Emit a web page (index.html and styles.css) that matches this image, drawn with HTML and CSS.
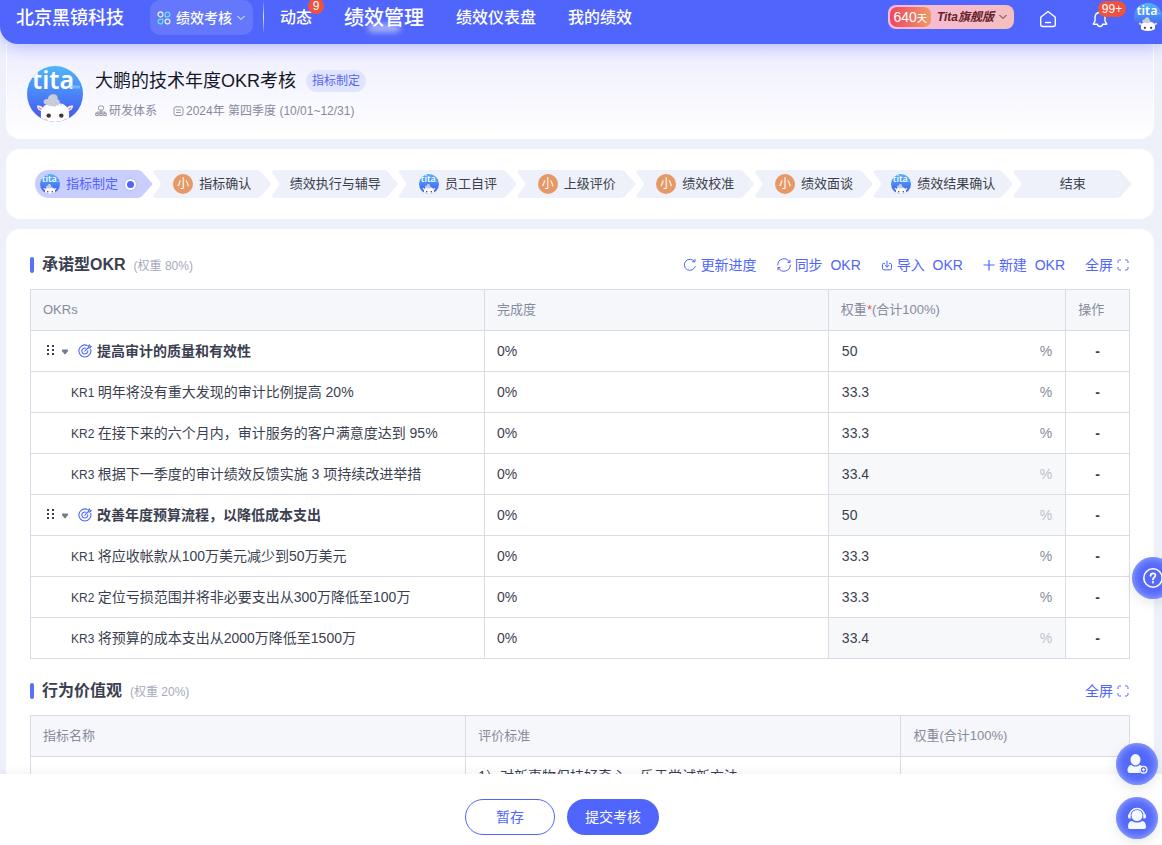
FILE: index.html
```html
<!DOCTYPE html>
<html lang="zh-CN">
<head>
<meta charset="utf-8">
<meta name="viewport" content="width=device-width, initial-scale=1">
<title>绩效考核</title>
<link rel="stylesheet" href="styles.css">
</head>
<body>
<svg class="defs" aria-hidden="true">
  <defs>
    <linearGradient id="sky" x1="0" y1="0" x2="0" y2="1"><stop offset="0" stop-color="#4fb6fb"/><stop offset="1" stop-color="#4553f2"/></linearGradient>
    <clipPath id="round"><circle cx="28" cy="28" r="28"/></clipPath>
  </defs>
</svg>
<svg class="sprite" aria-hidden="true">
  <symbol id="avatar" viewBox="0 0 56 56">
    <g clip-path="url(#round)">
      <rect width="56" height="56" fill="url(#sky)"/>
      <text x="5" y="23" class="avatar-word">tita</text>
      <path d="M43.500 19.500h9.500v3h-9.500z" fill="#8fd0ff" opacity=".6"/>
      <path d="M17 43c-2-3-5-4-7-3.500 0 3 2 5.500 5 5.500zM39 43c2-3 5-4 7-3.500 0 3-2 5.500-5 5.500z" fill="#fff"/>
      <path d="M15.500 43.500c-1.500-2-3-2.800-4.300-2.800.3 1.800 1.500 3 3.300 3.300zM40.500 43.500c1.500-2 3-2.800 4.300-2.800-.3 1.800-1.500 3-3.300 3.300z" fill="#f08f95"/>
      <path d="M14 50c-1-7 3-12 9-12.500h10c6 .5 10 5.500 9 12.500 1 5-4 8-14 8s-15-3-14-8z" fill="#fff"/>
      <path d="M17 37.500c-1.500-3 1-5 4-4.500 0-3 3-5 6-4.700 3 .2 4 3 3.500 5C33 34 34 38 31 39c-4 2-9 1.500-14-1.500z" fill="#c6ccda"/>
      <path d="M28 38v3M31 37v3M34 37.500v2.500" stroke="#c6ccda" fill="none"/>
      <circle cx="21.700" cy="49.600" r="2.200" fill="#43362f"/><circle cx="34.300" cy="49.600" r="2.200" fill="#43362f"/>
      <path d="M17 53.500h3M37 53.500h3" stroke="#f6cdd0" stroke-width="1.500"/>
    </g>
  </symbol>
  <symbol id="expand" viewBox="0 0 12 12"><path d="M1 4V2.500Q1 1 2.500 1H4M8 1h1.500Q11 1 11 2.500V4M11 8v1.500Q11 11 9.500 11H8M4 11H2.500Q1 11 1 9.500V8" fill="none" stroke="currentColor"/></symbol>
  <symbol id="target" viewBox="0 0 14 14"><g fill="none" stroke="currentColor" stroke-width="1.100" stroke-linecap="round"><path d="M9.200 1.400A6 6 0 1 0 12.700 5.400"/><path d="M7.800 4.200A3 3 0 1 0 9.800 6.800"/><path d="M6.800 7.200L10.300 3.700M10.300 3.700V2.300L11.500 1l.5 1.200 1.200.4-1.300 1.300z"/></g></symbol>
  <symbol id="grip" viewBox="0 0 8 12"><path d="M0 0h2v2H0zM5 0h2v2H5zM0 4h2v2H0zM5 4h2v2H5zM0 8h2v2H0zM5 8h2v2H5z" fill="currentColor"/></symbol>
  <symbol id="caret" viewBox="0 0 8 6"><path d="M1.500.500h5q1.300.500.300 1.800L4.700 5q-.7.700-1.400 0L1.200 2.300Q.200 1 1.500.500z" fill="currentColor"/></symbol>
  <symbol id="chev" viewBox="0 0 8 6"><path d="M.500 1L4 4.500 7.500 1" fill="none" stroke="currentColor"/></symbol>
</svg>

<header class="topbar">
  <strong class="company">北京黑镜科技</strong>
  <button class="module" type="button">
    <svg width="14" height="14" viewBox="0 0 14 14" fill="none" stroke-width="1.300"><path d="M3.500 1a2.400 2.400 0 1 1 0 4.800 2.400 2.400 0 0 1 0-4.800z" stroke="#e4e8ff"/><path d="M8.200 5.800V3.400a2.300 2.300 0 1 1 2.300 2.400z" stroke="#6ee0f2"/><path d="M5.800 8.200v2.400a2.300 2.300 0 1 1-2.300-2.400z" stroke="#5ce6d0"/><path d="M10.500 8.200a2.400 2.400 0 1 1 0 4.800 2.400 2.400 0 0 1 0-4.800z" stroke="#e4e8ff"/></svg>
    <span>绩效考核</span>
    <svg width="8" height="6"><use href="#chev"/></svg>
  </button>
  <span class="divider"></span>
  <nav class="nav">
    <a href="#" class="nav-link">动态<span class="count">9</span></a>
    <a href="#" class="nav-link current">绩效管理</a>
    <a href="#" class="nav-link">绩效仪表盘</a>
    <a href="#" class="nav-link">我的绩效</a>
  </nav>
  <div class="tools">
    <button class="plan" type="button"><span class="days">640<small>天</small></span><em>Tita旗舰版</em><svg width="8" height="6"><use href="#chev"/></svg></button>
    <button class="tool home" type="button" aria-label="首页"><svg width="18" height="18" viewBox="0 0 18 18" fill="none" stroke="#fff" stroke-width="1.400" stroke-linecap="round" stroke-linejoin="round"><path d="M1.700 7.200L9 1.500l7.300 5.700v7.300q0 2-2 2H3.700q-2 0-2-2z"/><path d="M6.500 12.500h5"/></svg></button>
    <button class="tool bell" type="button" aria-label="通知"><svg width="16" height="18" viewBox="0 0 16 18" fill="none" stroke="#fff" stroke-width="1.400" stroke-linecap="round" stroke-linejoin="round"><path d="M8 2.500c-3.300 0-5 2.200-5 5V11l-1.700 3.200h4q.5 2.300 2.700 2.300t2.700-2.300h4L13 11V7.500c0-2.800-1.700-5-5-5z"/></svg><span class="count wide">99+</span></button>
    <svg class="me" width="28" height="28"><use href="#avatar"/></svg>
  </div>
</header>

<main class="content">
  <section class="card profile">
    <svg width="56" height="56"><use href="#avatar"/></svg>
    <div class="profile-text">
      <div class="profile-title"><h1>大鹏的技术年度OKR考核</h1><span class="tag">指标制定</span></div>
      <div class="meta">
        <span><svg width="12" height="12" viewBox="0 0 12 12" fill="none" stroke="currentColor" stroke-width=".9"><rect x="3.500" y="1" width="5" height="4" rx="1.300"/><path d="M6 5v3M2 8.300V7h8v1.300"/><rect x=".8" y="8.300" width="2.400" height="2.200"/><rect x="4.800" y="8.300" width="2.400" height="2.200"/><rect x="8.800" y="8.300" width="2.400" height="2.200"/></svg>研发体系</span>
        <span><svg width="11" height="12" viewBox="0 0 11 12" fill="none" stroke="currentColor" stroke-width=".9"><rect x="1" y="1.800" width="9" height="8.700" rx="2"/><path d="M3.200 5h4.600M3.200 7.500h4.600"/></svg>2024年 第四季度 (10/01~12/31)</span>
      </div>
    </div>
  </section>

  <section class="card flow">
    <ol class="steps">
      <li class="step active"><svg width="20" height="20"><use href="#avatar"/></svg>指标制定<i class="dot"></i></li>
      <li class="step"><b class="who">小</b>指标确认</li>
      <li class="step">绩效执行与辅导</li>
      <li class="step"><svg width="20" height="20"><use href="#avatar"/></svg>员工自评</li>
      <li class="step"><b class="who">小</b>上级评价</li>
      <li class="step"><b class="who">小</b>绩效校准</li>
      <li class="step"><b class="who">小</b>绩效面谈</li>
      <li class="step"><svg width="20" height="20"><use href="#avatar"/></svg>绩效结果确认</li>
      <li class="step">结束</li>
    </ol>
  </section>

  <section class="card sheet">
    <div class="section-head">
      <h2>承诺型OKR</h2><span class="share">(权重 80%)</span>
      <div class="actions">
        <button type="button"><svg width="14" height="14" viewBox="0 0 14 14" fill="none" stroke="currentColor" stroke-linecap="round"><path d="M12.300 8.500A5.600 5.600 0 1 1 11.500 3.500M12 1.300v2.500H9.500"/></svg>更新进度</button>
        <button type="button"><svg width="14" height="14" viewBox="0 0 14 14" fill="none" stroke="currentColor" stroke-linecap="round"><path d="M.700 7A6.300 6.300 0 0 1 12.600 4.200M13.300 7A6.300 6.300 0 0 1 1.400 9.800M13 2v2.500h-2M1 12V9.500h2"/></svg>同步&nbsp; OKR</button>
        <button type="button"><svg width="12" height="12" viewBox="0 0 12 12" fill="none" stroke="currentColor" stroke-linecap="round" stroke-linejoin="round"><path d="M3.500 4.500H2.500Q1.500 4.500 1.500 5.500v4Q1.500 10.800 2.800 10.800h6.400Q10.500 10.800 10.500 9.500v-4Q10.500 4.500 9.500 4.500h-1M6 2v6M4 6.200l2 2 2-2"/></svg>导入&nbsp; OKR</button>
        <button type="button"><svg width="12" height="12" viewBox="0 0 12 12" fill="none" stroke="currentColor" stroke-width="1.200"><path d="M6 1v10.500M.500 6h11"/></svg>新建&nbsp; OKR</button>
        <button type="button">全屏<svg width="12" height="12"><use href="#expand"/></svg></button>
      </div>
    </div>
    <table class="grid okr">
      <colgroup><col class="c-name"><col class="c-done"><col class="c-weight"><col class="c-op"></colgroup>
      <thead><tr><th>OKRs</th><th>完成度</th><th>权重<span class="req">*</span>(合计100%)</th><th>操作</th></tr></thead>
      <tbody>
        <tr><td><div class="objective"><svg width="8" height="12"><use href="#grip"/></svg><svg class="caret" width="8" height="6"><use href="#caret"/></svg><svg class="aim" width="14" height="14"><use href="#target"/></svg>提高审计的质量和有效性</div></td><td>0%</td><td><label class="weight"><input type="text" value="50" aria-label="权重"><span>%</span></label></td><td class="op">-</td></tr>
        <tr><td class="kr"><small>KR1 </small>明年将没有重大发现的审计比例提高 20%</td><td>0%</td><td><label class="weight"><input type="text" value="33.3" aria-label="权重"><span>%</span></label></td><td class="op">-</td></tr>
        <tr><td class="kr"><small>KR2 </small>在接下来的六个月内，审计服务的客户满意度达到 95%</td><td>0%</td><td><label class="weight"><input type="text" value="33.3" aria-label="权重"><span>%</span></label></td><td class="op">-</td></tr>
        <tr><td class="kr"><small>KR3 </small>根据下一季度的审计绩效反馈实施 3 项持续改进举措</td><td>0%</td><td class="locked"><label class="weight"><input type="text" value="33.4" readonly aria-label="权重"><span>%</span></label></td><td class="op">-</td></tr>
        <tr><td><div class="objective"><svg width="8" height="12"><use href="#grip"/></svg><svg class="caret" width="8" height="6"><use href="#caret"/></svg><svg class="aim" width="14" height="14"><use href="#target"/></svg>改善年度预算流程，以降低成本支出</div></td><td>0%</td><td class="locked"><label class="weight"><input type="text" value="50" readonly aria-label="权重"><span>%</span></label></td><td class="op">-</td></tr>
        <tr><td class="kr"><small>KR1 </small>将应收帐款从100万美元减少到50万美元</td><td>0%</td><td><label class="weight"><input type="text" value="33.3" aria-label="权重"><span>%</span></label></td><td class="op">-</td></tr>
        <tr><td class="kr"><small>KR2 </small>定位亏损范围并将非必要支出从300万降低至100万</td><td>0%</td><td><label class="weight"><input type="text" value="33.3" aria-label="权重"><span>%</span></label></td><td class="op">-</td></tr>
        <tr><td class="kr"><small>KR3 </small>将预算的成本支出从2000万降低至1500万</td><td>0%</td><td class="locked"><label class="weight"><input type="text" value="33.4" readonly aria-label="权重"><span>%</span></label></td><td class="op">-</td></tr>
      </tbody>
    </table>

    <div class="section-head">
      <h2>行为价值观</h2><span class="share">(权重 20%)</span>
      <div class="actions"><button type="button">全屏<svg width="12" height="12"><use href="#expand"/></svg></button></div>
    </div>
    <table class="grid">
      <colgroup><col class="v-name"><col class="v-rule"><col class="v-weight"></colgroup>
      <thead><tr><th>指标名称</th><th>评价标准</th><th>权重(合计100%)</th></tr></thead>
      <tbody><tr class="tall"><td></td><td>1）对新事物保持好奇心，乐于尝试新方法</td><td></td></tr></tbody>
    </table>
  </section>
</main>

<footer class="footbar">
  <button class="btn ghost" type="button">暂存</button>
  <button class="btn solid" type="button">提交考核</button>
</footer>

<button class="fab help" type="button" aria-label="帮助"><svg width="22" height="22" viewBox="0 0 22 22" fill="none" stroke="#fff" stroke-width="1.600" stroke-linecap="round"><circle cx="11" cy="11" r="9.200"/><path d="M8.600 8.800q0-2.400 2.400-2.400t2.400 2.200c0 1.700-2.400 1.900-2.400 3.800" stroke-width="1.800"/><circle cx="11" cy="15.300" r=".4"/></svg></button>
<div class="fabs">
  <button class="fab" type="button" aria-label="邀请成员"><svg width="22" height="22" viewBox="0 0 22 22" fill="#f4f8ff"><ellipse cx="9.500" cy="6.700" rx="5" ry="5.700"/><path d="M1.500 17c0-3 1.800-5 4-5 1 1 2.300 1.500 4 1.500s3-.5 4-1.500c1 0 2 .5 2.500 1.500-2 1-3 3-2 6.500H4q-2.500 0-2.500-3z"/><circle cx="17.500" cy="16.700" r="3.300" fill="#5469fb" stroke="#f4f8ff" stroke-width="1.400"/><path d="M17.500 15.200v3M16 16.700h3" stroke="#f4f8ff" stroke-width="1.200"/></svg></button>
  <button class="fab" type="button" aria-label="在线客服"><svg width="22" height="24" viewBox="0 0 22 24" fill="#f4f8ff"><circle cx="11" cy="9.500" r="5.500"/><path d="M2 21c0-4 1.500-6 4-6 3 2 7 2 10 0 2.500 0 4 2 4 6q0 2-2 2H4q-2 0-2-2z"/><path d="M3.500 10a7.500 7.500 0 0 1 15 0" fill="none" stroke="#f4f8ff" stroke-width="1.500"/><path d="M2 8.500h2.700v4H3.500Q2 12.500 2 11zM20 8.500h-2.700v4h1.200q1.500 0 1.500-1.500z"/></svg></button>
</div>
</body>
</html>
```
FILE: styles.css
```css
* { box-sizing: border-box; }
html, body { height: 100%; }
body {
  margin: 0;
  display: flex;
  flex-direction: column;
  overflow: hidden;
  background: #eef1f9;
  color: #3b3f50;
  font: 14px/20px "Liberation Sans", "Noto Sans CJK SC", sans-serif;
}
button, input { font: inherit; color: inherit; }
button { border: 0; padding: 0; background: none; cursor: pointer; white-space: nowrap; }
h1, h2, ol { margin: 0; padding: 0; }
svg { flex: none; display: block; }
.defs { position: absolute; width: 0; height: 0; }
.sprite { display: none; }
.avatar-word { font: 600 25px "Noto Sans", sans-serif; fill: #fff; }

/* Top bar */
.topbar {
  position: relative;
  z-index: 2;
  flex: none;
  display: flex;
  align-items: flex-start;
  height: 44px;
  padding-left: 16px;
  background: #5065fb;
  border-bottom-left-radius: 18px;
  box-shadow: 0 2px 18px rgba(80, 101, 251, .4);
  color: #fff;
}
.company { font-size: 18px; font-weight: 500; line-height: 36px; white-space: nowrap; }
.module {
  display: flex;
  align-items: center;
  gap: 5px;
  height: 35px;
  margin-left: 26px;
  padding: 0 8px 0 7px;
  border-radius: 10px;
  background: rgba(255, 255, 255, .12);
  font-weight: 500;
}
.divider { width: 1px; height: 30px; margin: 2px 16px 0 10px; background: linear-gradient(rgba(255,255,255,.1), rgba(255,255,255,.8), rgba(255,255,255,.1)); }
.nav { display: flex; gap: 32px; }
.nav-link { position: relative; color: #fff; font-size: 16px; font-weight: 500; line-height: 36px; text-decoration: none; white-space: nowrap; }
.current { font-size: 20px; }
.current::after {
  content: "";
  position: absolute;
  left: 24px;
  right: 24px;
  top: 24px;
  height: 8px;
  border-radius: 4px;
  background: rgba(255, 255, 255, .55);
  filter: blur(3px);
}
.count {
  position: absolute;
  top: -2px;
  left: 28px;
  min-width: 16px;
  height: 16px;
  border-radius: 8px;
  background: #ee5340;
  color: #fff;
  font-size: 12px;
  font-weight: 400;
  line-height: 16px;
  text-align: center;
}
.wide { top: -7px; left: 6px; min-width: 28px; }
.tools { display: flex; align-items: center; height: 34px; margin-left: auto; }
.plan {
  display: flex;
  align-items: center;
  height: 24px;
  padding: 0 7px 0 2px;
  border-radius: 8px;
  background: linear-gradient(90deg, #f9b8dd, #f4bfbd);
  color: #64222b;
  font-size: 12px;
}
.days {
  height: 20px;
  margin-right: 6px;
  padding: 0 4px;
  border-radius: 7px;
  background: linear-gradient(90deg, #ee4763, #ee9a66);
  color: #fff;
  font-size: 14px;
  line-height: 20px;
}
.days small { font-size: 10px; font-weight: 500; }
.plan em { margin-right: 5px; font-weight: 700; }
.tool { position: relative; padding-top: 4px; }
.home { margin-left: 25px; }
.bell { margin-left: 35px; }
.wide { top: -5px; }
.me { margin-left: 26px; }

/* Page body */
.content {
  flex: 1;
  min-height: 0;
  overflow-y: auto;
  scrollbar-width: none;
  padding: 0 8px 0 6px;
}
.card { border-radius: 14px; background: #fff; }
.profile {
  display: flex;
  align-items: flex-start;
  gap: 12px;
  padding: 22px 20px 17px;
  border: solid #fff;
  border-width: 0 1px;
  border-radius: 0 0 14px 14px;
  background: linear-gradient(#eeeeff, #fff);
}
.profile-title { display: flex; align-items: center; gap: 10px; height: 30px; }
h1 { color: #151826; font-size: 18px; font-weight: 400; line-height: 30px; }
.tag { padding: 0 6px; border-radius: 11px; background: #e1e4fe; color: #5065fb; font-size: 12px; line-height: 22px; }
.meta { display: flex; gap: 16px; margin-top: 5px; color: #868b9c; font-size: 12px; }
.meta span { display: flex; align-items: center; gap: 2px; }

.flow { margin-top: 10px; padding: 21px 23px 21px 29px; }
.steps { display: flex; list-style: none; }
.step {
  flex: 1 1 0;
  display: flex;
  align-items: center;
  justify-content: center;
  gap: 6px;
  height: 28px;
  padding: 0 17px 0 19px;
  background: #eef1f9;
  font-size: 13px;
  white-space: nowrap;
  clip-path: polygon(1px 2px, 3px 0, calc(100% - 14px) 0, calc(100% - 11px) 1px, calc(100% - 9px) 3px, 100% 13px, 100% 15px, calc(100% - 9px) 25px, calc(100% - 11px) 27px, calc(100% - 14px) 28px, 3px 28px, 1px 26px, 8px 16px, 9px 14px, 8px 12px);
}
.active {
  padding: 0 16px 0 5px;
  border-radius: 14px 0 0 14px;
  background: #c8cefe;
  color: #5065fb;
  clip-path: polygon(0 0, calc(100% - 14px) 0, calc(100% - 11px) 1px, calc(100% - 9px) 3px, 100% 13px, 100% 15px, calc(100% - 9px) 25px, calc(100% - 11px) 27px, calc(100% - 14px) 28px, 0 28px);
}
.who { width: 20px; height: 20px; border-radius: 50%; background: #e69866; color: #fff; font-size: 12px; font-weight: 400; line-height: 20px; text-align: center; }
.dot { width: 11px; height: 11px; margin-left: 1px; border: 2px solid #fff; border-radius: 50%; background: #5065fb; box-shadow: 0 0 0 1px #b4bcfd; }

/* Assessment tables */
.sheet { margin-top: 10px; padding: 16px 24px 40px; }
.section-head { display: flex; align-items: center; height: 40px; margin-bottom: 4px; }
.grid + .section-head { margin: 12px 0 4px; }
h2 { display: flex; align-items: center; gap: 8px; font-size: 16px; line-height: 24px; color: #3b3f50; }
h2::before { content: ""; width: 4px; height: 16px; border-radius: 2px; background: #5a6ffb; }
.share { margin-left: 8px; padding-top: 2px; color: #a6aabb; font-size: 12px; }
.actions { display: flex; gap: 20px; margin-left: auto; padding-right: 1px; color: #5065fb; }
.actions button { display: flex; align-items: center; gap: 4px; }
.grid { width: 100%; border-collapse: collapse; table-layout: fixed; }
.c-name { width: 41.3%; }
.c-done { width: 31.3%; }
.c-weight { width: 21.6%; }
.c-op { width: 5.8%; }
.v-name, .v-rule { width: 39.6%; }
.v-weight { width: 20.8%; }
th, td { height: 41px; padding: 0 12px; border: 1px solid #d9dce7; text-align: left; white-space: nowrap; }
th { background: #f6f7fb; color: #868b9c; font-size: 13px; font-weight: 400; }
.req { color: #ee5340; }
.kr { padding-left: 40px; }
.kr small { font-size: 12px; white-space: pre; }
.objective { display: flex; align-items: center; padding-left: 4px; font-weight: 700; }
.caret { margin: 2px 9px 0 6px; color: #777c8c; }
.aim { margin-right: 5px; color: #5065fb; }
.weight { display: flex; align-items: center; padding-right: 1px; color: #868b9c; }
.weight input { flex: 1; min-width: 0; padding: 0 1px; border: 0; outline: 0; background: none; color: #3b3f50; }
.locked { background: #f7f8fa; }
.locked .weight { color: #bbbfcc; }
.op { text-align: center; font-weight: 700; }
.tall td { height: 90px; padding-top: 9px; vertical-align: top; }

/* Bottom bar */
.footbar {
  position: relative;
  flex: none;
  display: flex;
  justify-content: center;
  gap: 12px;
  padding: 25px 38px 10px 0;
  background: #fff;
  box-shadow: 0 -2px 8px rgba(60, 70, 110, .06);
}
.btn { height: 36px; border-radius: 18px; }
.ghost { padding: 0 30px; border: 1px solid #5065fb; color: #5065fb; }
.solid { padding: 0 18px; background: #5065fb; color: #fff; }

/* Floating buttons */
.fabs { position: fixed; right: 4px; bottom: 6px; z-index: 3; display: grid; gap: 12px; }
.fab {
  display: grid;
  place-items: center;
  width: 42px;
  height: 42px;
  border-radius: 50%;
  background: #5469fb;
  box-shadow: inset 0 0 8px rgba(190, 205, 255, .8), 0 4px 12px rgba(60, 70, 110, .12);
}
.help { position: fixed; right: -12px; bottom: 246px; z-index: 3; }
```
